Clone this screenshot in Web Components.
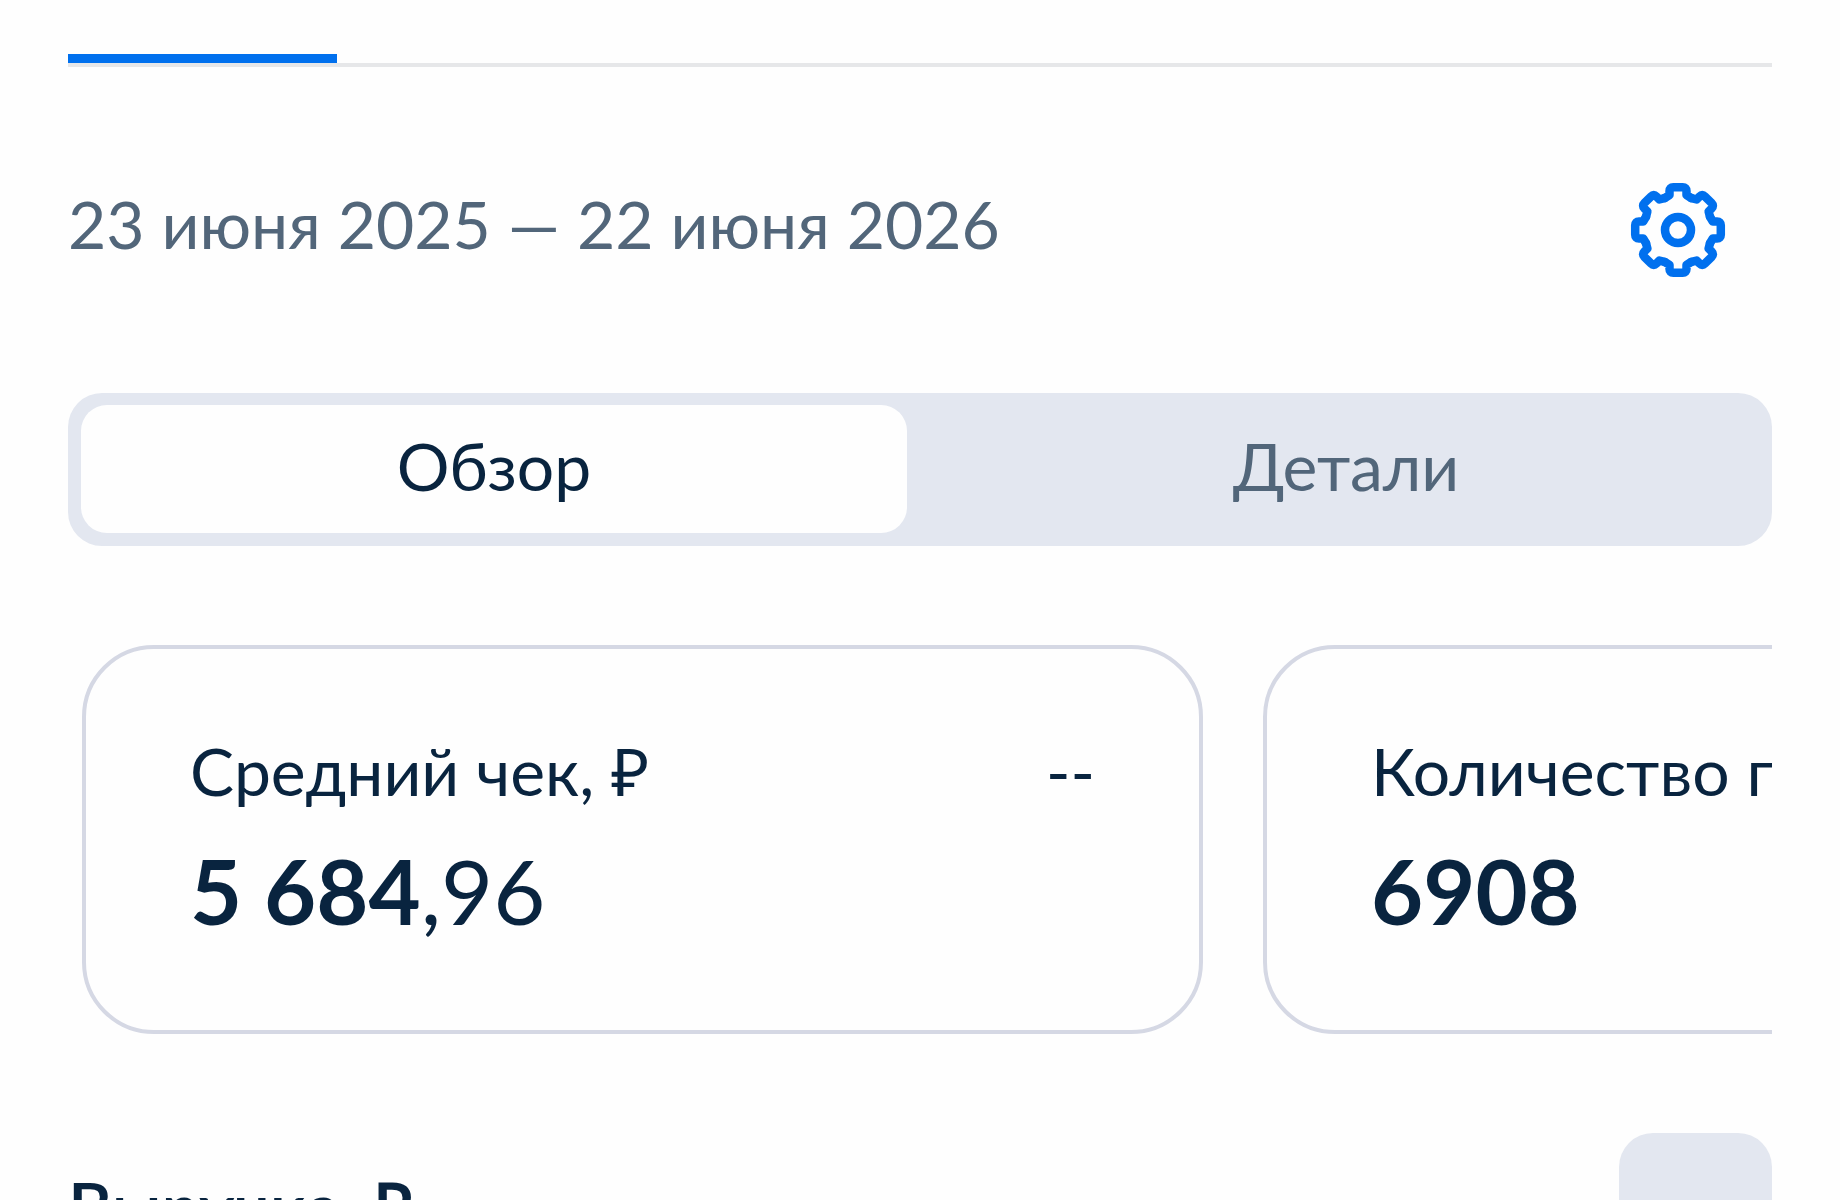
<!DOCTYPE html>
<html lang="ru">
<head>
<meta charset="utf-8">
<meta name="viewport" content="width=device-width, initial-scale=1">
<title>Статистика</title>
<style>
    html {
        scrollbar-width: none;
    }
    body {
        --accent: #0070ee;
        --text: #09243f;
        --muted: #52667a;
        --surface: #e3e7f0;
        --border: #d5d8e4;
        margin: 0;
        background: #fefefe;
        color: var(--text);
        font: 400 66px/80px Lato, "Open Sans", sans-serif;
    }
</style>
</head>
<body>
<stats-page>
    <tab-line></tab-line>
    <period-bar>23 июня 2025 — 22 июня 2026</period-bar>
    <segment-control>
        <segment-item selected>Обзор</segment-item>
        <segment-item>Детали</segment-item>
    </segment-control>
    <card-row>
        <metric-card>
            <span slot="label">Средний чек, ₽</span>
            <span slot="trend">--</span>
            <b slot="value">5&nbsp;684</b>
            <span slot="fraction">,96</span>
        </metric-card>
        <metric-card>
            <span slot="label">Количество продаж</span>
            <b slot="value">6908</b>
        </metric-card>
    </card-row>
    <chart-header>Выручка, ₽</chart-header>
</stats-page>

<script>
class StatsPage extends HTMLElement {
    constructor() {
        super();
        this.attachShadow({ mode: 'open' }).innerHTML = `
            <style>
                :host {
                    display: block;
                    padding: 54px 68px 0;
                }
            </style>
            <slot></slot>
        `;
    }
}
customElements.define('stats-page', StatsPage);

class TabLine extends HTMLElement {
    constructor() {
        super();
        this.attachShadow({ mode: 'open' }).innerHTML = `
            <style>
                :host {
                    display: block;
                    border-bottom: 4px solid #e6e7e9;
                }
                .active {
                    width: 269px;
                    height: 9px;
                    background: var(--accent);
                }
            </style>
            <div class="active"></div>
        `;
    }
}
customElements.define('tab-line', TabLine);

class PeriodBar extends HTMLElement {
    constructor() {
        super();
        this.attachShadow({ mode: 'open' }).innerHTML = `
            <style>
                :host {
                    display: flex;
                    align-items: flex-start;
                    justify-content: space-between;
                    padding: 115px 46px 0 0;
                    color: var(--muted);
                    line-height: 84px;
                }
                button {
                    display: block;
                    padding: 0;
                    border: none;
                    background: none;
                    color: var(--accent);
                    cursor: pointer;
                }
                svg {
                    display: block;
                    width: 96px;
                    height: 96px;
                    fill: none;
                    stroke: currentColor;
                    stroke-width: 8.5;
                    stroke-linecap: round;
                    stroke-linejoin: round;
                }
            </style>
            <slot></slot>
            <button type="button" aria-label="Настройки">
                <svg viewBox="-48 -48 96 96" aria-hidden="true">
                    <circle r="13"></circle>
                </svg>
            </button>
        `;
        // the gear outline is one tooth repeated eight times
        const svg = this.shadowRoot.querySelector('svg');
        for (let i = 0; i < 8; i++) {
            const tooth = document.createElementNS('http://www.w3.org/2000/svg', 'path');
            tooth.setAttribute('d', 'M-13.2-32L-8.5-34.8V-39Q-8.5-42.8-4.7-42.8H4.7Q8.5-42.8 8.5-39V-34.8L13.2-32');
            tooth.setAttribute('transform', `rotate(${i * 45})`);
            svg.append(tooth);
        }
    }
}
customElements.define('period-bar', PeriodBar);

class SegmentControl extends HTMLElement {
    constructor() {
        super();
        this.attachShadow({ mode: 'open' }).innerHTML = `
            <style>
                :host {
                    display: grid;
                    grid-template-columns: 1fr 1fr;
                    gap: 26px;
                    margin-top: 115px;
                    padding: 12px 13px 13px;
                    border-radius: 34px;
                    background: var(--surface);
                }
            </style>
            <slot></slot>
        `;
    }

    connectedCallback() {
        this.addEventListener('click', (event) => {
            const item = event.target.closest('segment-item');
            if (!item) return;
            this.querySelectorAll('segment-item').forEach((el) => {
                el.toggleAttribute('selected', el === item);
            });
        });
    }
}
customElements.define('segment-control', SegmentControl);

class SegmentItem extends HTMLElement {
    static observedAttributes = ['selected'];

    constructor() {
        super();
        this.attachShadow({ mode: 'open' }).innerHTML = `
            <style>
                :host {
                    display: block;
                }
                button {
                    display: block;
                    width: 100%;
                    padding: 21px 0 27px;
                    border: none;
                    border-radius: 26px;
                    background: none;
                    color: var(--muted);
                    font: inherit;
                    cursor: pointer;
                }
                :host([selected]) button {
                    background: #fefefe;
                    color: var(--text);
                }
            </style>
            <button type="button"><slot></slot></button>
        `;
    }

    attributeChangedCallback() {
        this.shadowRoot.querySelector('button').setAttribute('aria-pressed', this.hasAttribute('selected'));
    }
}
customElements.define('segment-item', SegmentItem);

class CardRow extends HTMLElement {
    constructor() {
        super();
        this.attachShadow({ mode: 'open' }).innerHTML = `
            <style>
                :host {
                    display: flex;
                    gap: 60px;
                    margin-top: 99px;
                    padding-left: 14px;
                    overflow-x: auto;
                    scrollbar-width: none;
                }
            </style>
            <slot></slot>
        `;
    }
}
customElements.define('card-row', CardRow);

class MetricCard extends HTMLElement {
    constructor() {
        super();
        this.attachShadow({ mode: 'open' }).innerHTML = `
            <style>
                :host {
                    display: block;
                    box-sizing: border-box;
                    flex: 0 0 min(1121px, 90%);
                    padding: 82px 104px;
                    border: 4px solid var(--border);
                    border-radius: 72px;
                }
                .head {
                    display: flex;
                    justify-content: space-between;
                    white-space: nowrap;
                }
                .value {
                    margin-top: 21px;
                    font-size: 90px;
                    line-height: 116px;
                }
            </style>
            <div class="head">
                <slot name="label"></slot>
                <slot name="trend"></slot>
            </div>
            <div class="value"><slot name="value"></slot><slot name="fraction"></slot></div>
        `;
    }
}
customElements.define('metric-card', MetricCard);

class ChartHeader extends HTMLElement {
    constructor() {
        super();
        this.attachShadow({ mode: 'open' }).innerHTML = `
            <style>
                :host {
                    display: flex;
                    align-items: center;
                    justify-content: space-between;
                    margin-top: 99px;
                }
                h2 {
                    margin: 0;
                    padding-bottom: 8px;
                    font-size: 68px;
                    font-weight: 600;
                }
                button {
                    display: flex;
                    align-items: center;
                    justify-content: center;
                    gap: 12px;
                    width: 153px;
                    height: 153px;
                    padding: 0;
                    border: none;
                    border-radius: 34px;
                    background: var(--surface);
                    cursor: pointer;
                }
                i {
                    width: 12px;
                    height: 12px;
                    border-radius: 50%;
                    background: var(--accent);
                }
            </style>
            <h2><slot></slot></h2>
            <button type="button" aria-label="Ещё"><i></i><i></i><i></i></button>
        `;
    }
}
customElements.define('chart-header', ChartHeader);
</script>
</body>
</html>
